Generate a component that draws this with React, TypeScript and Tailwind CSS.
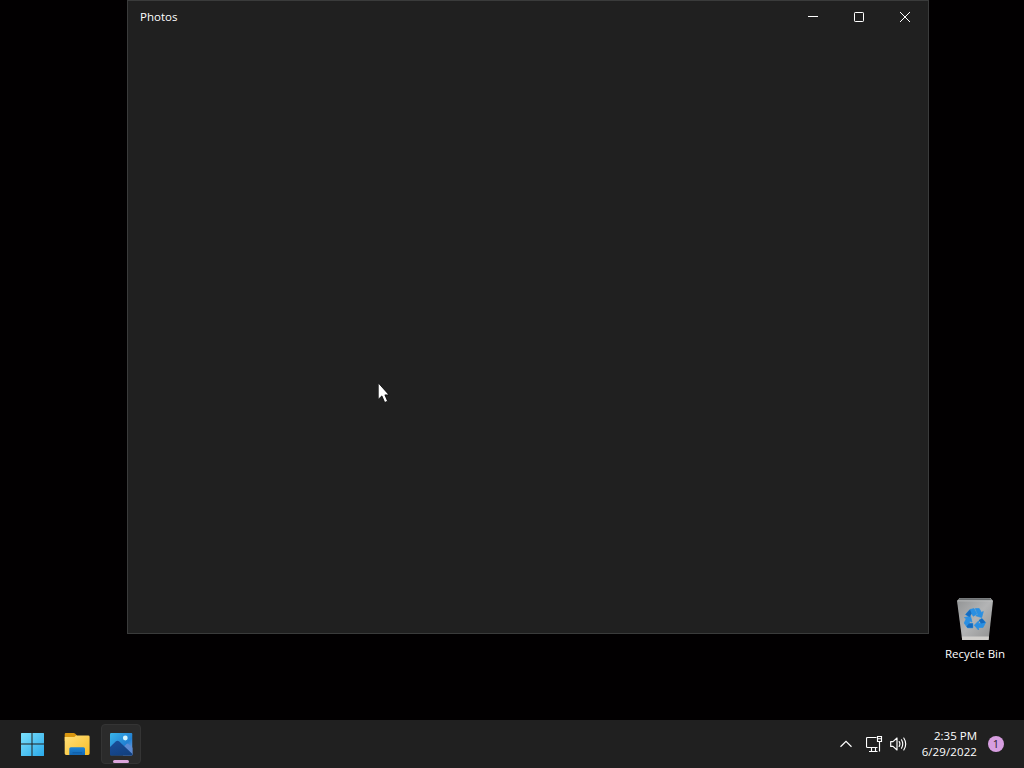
import { ReactNode } from 'react';

const StartIcon = () => (
  <svg className="size-6" viewBox="0 0 24 24">
    <defs>
      <linearGradient id="start" x1="0" y1="0" x2="1" y2="1">
        <stop offset="0" stopColor="#7be0fb" />
        <stop offset="1" stopColor="#2aa9ea" />
      </linearGradient>
    </defs>
    <path
      d="M1.6 1H11.5V11.5H1V1.6Q1 1 1.6 1ZM12.5 1H23.4Q24 1 24 1.6V11.5H12.5ZM1 12.5H11.5V24H1.6Q1 24 1 23.4ZM12.5 12.5H24V23.4Q24 24 23.4 24H12.5Z"
      fill="url(#start)"
    />
  </svg>
);

const FolderIcon = () => (
  <svg className="size-6 overflow-visible" viewBox="0 0 24 24">
    <defs>
      <linearGradient id="folder" x1="0" y1="0" x2="1" y2="1">
        <stop offset="0" stopColor="#ffe07a" />
        <stop offset="1" stopColor="#f9bd27" />
      </linearGradient>
      <linearGradient id="folder-tray" x1="0" y1="0" x2="0" y2="1">
        <stop offset="0" stopColor="#1d84d6" />
        <stop offset="1" stopColor="#1467b3" />
      </linearGradient>
    </defs>
    <path d="M-0.3 2.2Q-0.3 1 0.9 1H8.6Q9.4 1 10 1.6L12 3.6V9H-0.3Z" fill="#d9960f" />
    <path
      d="M-0.3 5H8.6Q9.4 5 10 4.4L11 3.4H23.2Q24.6 3.4 24.6 4.8V21.6Q24.6 23 23.2 23H1.1Q-0.3 23 -0.3 21.6Z"
      fill="url(#folder)"
    />
    <path d="M4.3 23V16.8Q4.3 15.3 5.8 15.3H18.5Q20 15.3 20 16.8V23Z" fill="url(#folder-tray)" />
    <path d="M7.5 20.8H17" stroke="#0f5ca6" strokeWidth="1" />
  </svg>
);

const PhotosIcon = () => (
  <svg className="size-6" viewBox="0 0 24 24">
    <defs>
      <linearGradient id="sky" x1="0" y1="0" x2="1" y2="1">
        <stop offset="0" stopColor="#39b5ea" />
        <stop offset="0.6" stopColor="#2280d2" />
        <stop offset="1" stopColor="#8fa8e8" />
      </linearGradient>
      <linearGradient id="hill" x1="0" y1="0" x2="0.6" y2="1">
        <stop offset="0" stopColor="#1a4f9c" />
        <stop offset="1" stopColor="#12407f" />
      </linearGradient>
      <clipPath id="frame">
        <rect x="1" y="1" width="22.5" height="22.5" rx="1.2" />
      </clipPath>
    </defs>
    <g clipPath="url(#frame)">
      <rect x="1" y="1" width="22.5" height="22.5" fill="url(#sky)" />
      <path d="M14 15.5L17.5 12Q18.5 11.2 19.5 12L24 16V24H14Z" fill="#5c8bd3" />
      <path d="M1 15L7 9.3Q8.5 8.2 10 9.3L24 22.5V24H1Z" fill="url(#hill)" />
      <circle cx="16.3" cy="6" r="2.4" fill="#d5f5fd" />
    </g>
  </svg>
);

const RecycleBinIcon = () => (
  <svg className="h-11 w-10" viewBox="0 0 40 44">
    <defs>
      <linearGradient id="bin" x1="0" y1="0" x2="1" y2="1">
        <stop offset="0" stopColor="#919394" />
        <stop offset="0.5" stopColor="#b3b4b5" />
        <stop offset="1" stopColor="#8f8f8f" />
      </linearGradient>
    </defs>
    <path d="M4.5 1H35.5L38 4L33.6 43H7.2L2 4Z" fill="url(#bin)" />
    <path d="M5.2 1.2H34.8L36.8 3.6H3.2Z" fill="#6b6e70" />
    <path d="M2.4 3.8H37.6" stroke="#c9cbcc" strokeWidth="0.8" />
    <path d="M6.8 39.6H34L33.6 43H7.2Z" fill="#d0cecb" />
    {/* arrows, with the darker folds on top */}
    <g fill="#2a8fe2" stroke="#2a8fe2" strokeWidth="0.7" strokeLinejoin="round">
      <path d="M15 12.5L19 11.6L22 17L18.3 19.2L16.5 16.5L14.5 20L10.5 17.5Z" />
      <path d="M20.3 11.6H24.2L26.5 15.5L28.3 14.5L26.7 20.5L20.8 18.8L22.8 17.6Z" />
      <path d="M27 21.5L30.6 25.5L28 30.5H23.5V33L19.3 28.3L23.5 24V26.5H26L24 23.2Z" />
      <path d="M9.4 20.6L15.5 19.3L17 25L15 24L14 26.4H17.8V30.8H12.5L9.2 26L11.2 21.8Z" />
    </g>
    <g fill="#156bbf">
      <path d="M11.5 29.5L14 26.4H17.8V30.8H12.5Z" />
      <path d="M15 12.5L16.5 16.5L14.5 20L10.5 17.5Z" />
      <path d="M27 21.5L30.6 25.5L26 26.5L24 23.2Z" />
    </g>
  </svg>
);

const NetworkIcon = () => (
  <svg className="h-4 w-[17px]" viewBox="0 0 17 16" fill="none" stroke="#fff" strokeWidth="1.15">
    <path d="M10.5 1.5H1.5Q0.5 1.5 0.5 2.5V10.5Q0.5 11.5 1.5 11.5H11.5M3 15.5H11.5M5.5 11.5V15.5M9.5 11.5V15.5" />
    <path d="M11.5 0.5H15.5V5.5H11.5ZM11.5 2.7H15.5M13.5 5.5V15.5" />
  </svg>
);

const VolumeIcon = () => (
  <svg
    className="h-4 w-[17px]"
    viewBox="0 0 17 16"
    fill="none"
    stroke="#fff"
    strokeWidth="1.15"
    strokeLinecap="round"
    strokeLinejoin="round"
  >
    <path d="M0.7 5.6H3L7 2V14L3 10.4H0.7Z" />
    <path d="M9.2 5.6Q10.6 8 9.2 10.4M11.5 3.8Q14 8 11.5 12.2M13.8 2Q17.6 8 13.8 14" />
  </svg>
);

const CaptionButton = ({ children }: { children: ReactNode }) => (
  <button className="flex h-8 w-[46px] items-center justify-center">
    <svg className="size-3" viewBox="0 0 12 12" fill="none" stroke="#fff">
      {children}
    </svg>
  </button>
);

const PhotosWindow = () => (
  <div className="absolute top-0 left-[127px] h-[634px] w-[802px] border border-[#3a3b3b] bg-[#202020]">
    <div className="flex h-8 items-center justify-between">
      <span className="pl-3">Photos</span>
      <div className="flex">
        <CaptionButton>
          <path d="M1 5.5H11" />
        </CaptionButton>
        <CaptionButton>
          <rect x="1.5" y="1.5" width="9" height="9" rx="0.7" />
        </CaptionButton>
        <CaptionButton>
          <path d="M1 1L11 11M11 1L1 11" />
        </CaptionButton>
      </div>
    </div>
  </div>
);

const Taskbar = () => (
  <div className="flex h-12 items-center justify-between bg-[#202020]">
    <div className="flex items-center gap-1 pl-[13px]">
      <button className="flex size-10 items-center justify-center pr-0.5">
        <StartIcon />
      </button>
      <button className="flex size-10 items-center justify-center">
        <FolderIcon />
      </button>
      <button className="relative flex size-10 items-center justify-center rounded border border-[#343434] bg-[#2b2b2b]">
        <PhotosIcon />
        <span className="absolute bottom-0 h-[3px] w-4 rounded-full bg-[#dca5dc]" />
      </button>
    </div>
    <div className="flex items-center pr-5">
      <svg className="mr-[14px] h-2 w-3" viewBox="0 0 12 8" fill="none" stroke="#fff" strokeWidth="1.2">
        <path d="M0.5 6.8L6 1.4L11.5 6.8" />
      </svg>
      <div className="mr-3.5 flex gap-[7px]">
        <NetworkIcon />
        <VolumeIcon />
      </div>
      <div className="mr-[11px] w-14 text-right leading-4 whitespace-nowrap">
        <div>2:35 PM</div>
        <div className="tracking-[0.1px]">6/29/2022</div>
      </div>
      <div className="flex size-4 items-center justify-center rounded-full bg-[#d79ee0] text-[11px] text-[#2b202d]">1</div>
    </div>
  </div>
);

export default function App() {
  return (
    <div className="flex h-[768px] w-[1024px] flex-col overflow-hidden bg-black font-['Open_Sans','Noto_Sans',sans-serif] text-[11.5px] font-medium text-white">
      <div className="relative flex-1 bg-[#020001]">
        <PhotosWindow />
        <div className="absolute top-[597px] left-[935px] flex w-20 flex-col items-center">
          <RecycleBinIcon />
          <span className="mt-[5px] leading-4 whitespace-nowrap">Recycle Bin</span>
        </div>
        <svg className="absolute top-[382px] left-[378px] h-[22px] w-3.5" viewBox="0 0 14 22">
          <path
            d="M0.2 0.8V17.4L3.9 13.9L6.7 20.5L9.6 19.2L6.9 12.9H11Z"
            fill="#fff"
            stroke="#000"
            strokeWidth="0.8"
          />
        </svg>
      </div>
      <Taskbar />
    </div>
  );
}
